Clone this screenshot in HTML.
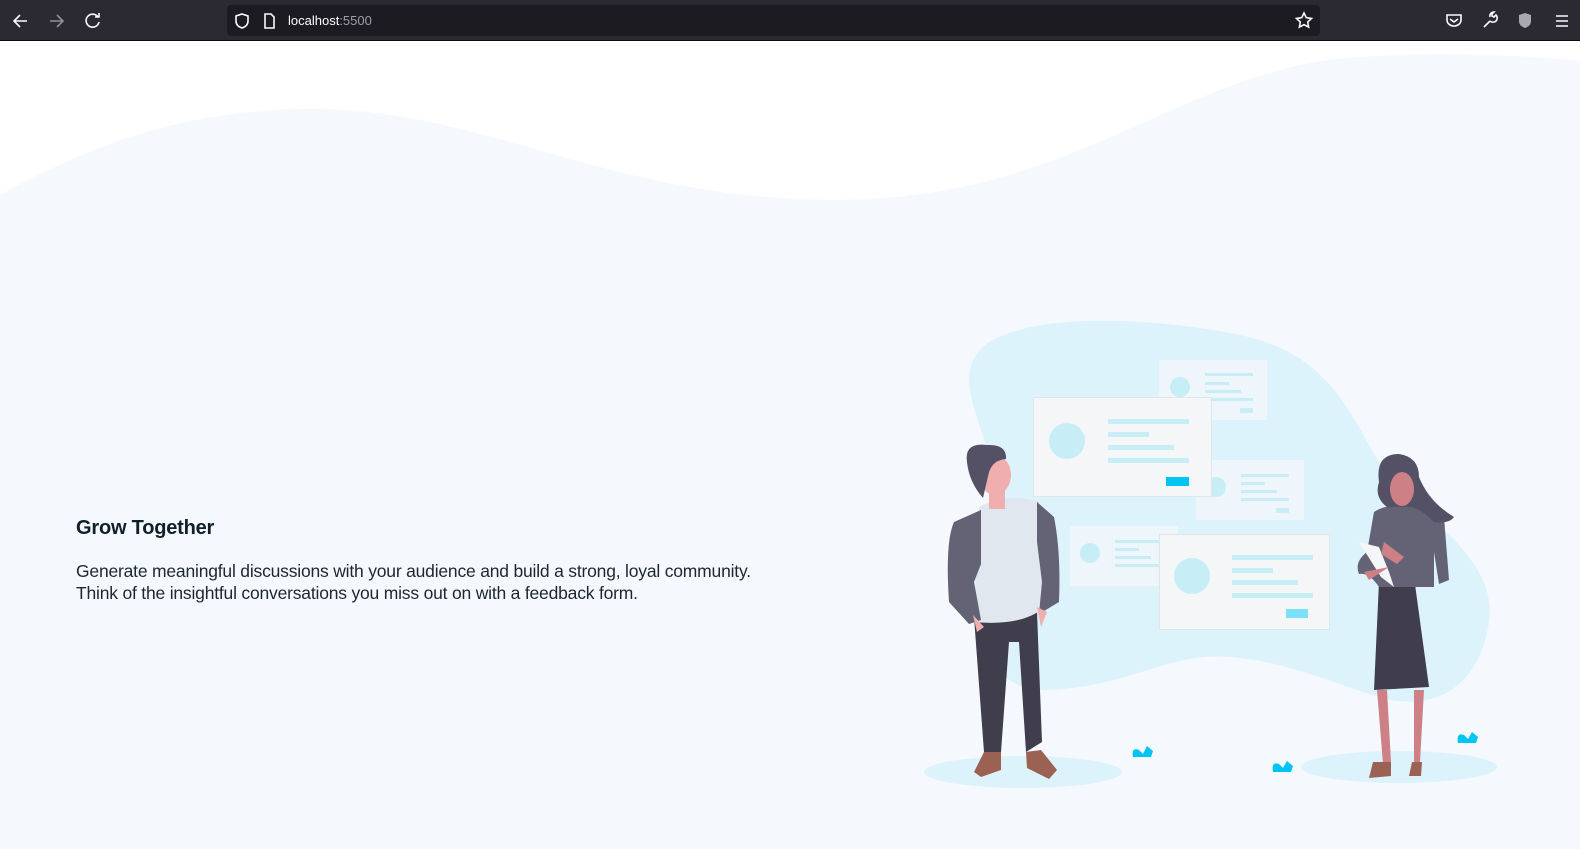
<!DOCTYPE html>
<html><head><meta charset="utf-8"><style>
*{margin:0;padding:0;box-sizing:border-box}
body{width:1580px;height:849px;overflow:hidden;background:#f5f9fd;font-family:"Liberation Sans",sans-serif;position:relative}
.bar{position:absolute;left:0;top:0;width:1580px;height:41px;background:#2b2a33;border-bottom:1px solid #0c0c0d}
.url{position:absolute;left:227px;top:5px;width:1093px;height:31px;background:#1c1b22;border-radius:4px}
.url span{position:absolute;left:61px;top:8px;font-size:13px;color:#fbfbfe}
.url span i{font-style:normal;color:#9e9ea6}
h2{position:absolute;left:76px;top:517px;font-size:20px;font-weight:bold;color:#10202a;letter-spacing:-0.2px}
p{position:absolute;left:76px;top:560px;font-size:17.5px;line-height:22px;color:#1c2730;letter-spacing:-0.2px}
</style></head><body>
<svg style="position:absolute;left:0;top:41px" width="1580" height="808">
<rect width="1580" height="808" fill="#f5f9fd"/>
<path d="M0 0 H1580 V20 C1500 12 1400 10 1320 20 C1150 50 1050 170 800 158 C600 150 480 70 320 68 C180 66 80 110 0 154 Z" fill="#ffffff"/>
</svg>
<div class="bar">
<div class="url"><span>localhost<i>:5500</i></span></div>
<svg width="1580" height="41" style="position:absolute;left:0;top:0" fill="none" stroke="#fbfbfe" stroke-width="1.6">
<path d="M27 21H14M20 15l-6 6 6 6"/>
<path d="M50 21h13M57 15l6 6-6 6" stroke="#8f8f9d"/>
<path d="M98 17a6.5 6.5 0 1 0 1 5M99 13v4h-4"/>
<path d="M242 14l6 2v5c0 4-3 6-6 7-3-1-6-3-6-7v-5z"/>
<path d="M265 14h6l3 3v11h-9z"/>
<path d="M1304 13l2.3 4.7 5.2.7-3.8 3.6.9 5.1-4.6-2.4-4.6 2.4.9-5.1-3.8-3.6 5.2-.7z"/>
<path d="M1447 15h14v5a7 6 0 0 1-14 0z M1450 19l4 3 4-3"/>
<path d="M1484 27l6-6M1490 21a4 4 0 0 0 6-6l-2 2-2-1 0-2 2-2a4 4 0 0 0-4 5"/>
<path d="M1556 16h12M1556 21h12M1556 26h12"/>
</svg>
<svg style="position:absolute;left:1518px;top:12px" width="14" height="17"><path d="M7 1l6 2v6c0 4-3 6-6 7-3-1-6-3-6-7V3z" fill="#a8a8b0"/></svg>
</div>
<h2>Grow Together</h2>
<p>Generate meaningful discussions with your audience and build a strong, loyal community.<br>Think of the insightful conversations you miss out on with a feedback form.</p>
<svg style="position:absolute;left:909px;top:302px" width="620" height="500">
<path d="M80 40 C130 10 250 15 340 35 C420 55 440 110 470 160 C500 210 590 250 580 320 C570 390 520 410 470 395 C420 380 380 360 320 355 C260 350 220 385 140 388 C90 390 70 350 60 300 C50 240 100 220 85 170 C70 110 40 70 80 40Z" fill="#dcf3fc"/>
<ellipse cx="114" cy="470" rx="99" ry="16" fill="#dcf3fc"/>
<ellipse cx="490" cy="465" rx="98" ry="16" fill="#dcf3fc"/>
<rect x="250" y="58" width="108" height="60" fill="#eef6fb"/>
<circle cx="271" cy="85" r="10" fill="#c7edf7"/>
<rect x="296" y="71" width="48" height="3" fill="#c7edf7"/><rect x="296" y="80" width="24" height="3" fill="#c7edf7"/><rect x="296" y="88" width="36" height="3" fill="#c7edf7"/><rect x="296" y="96" width="48" height="3" fill="#c7edf7"/><rect x="331" y="106" width="13" height="5" fill="#c7edf7"/>
<rect x="287" y="158" width="108" height="60" fill="#eef6fb"/>
<circle cx="307" cy="185" r="10" fill="#c7edf7"/>
<rect x="332" y="172" width="48" height="3" fill="#c7edf7"/><rect x="332" y="180" width="24" height="3" fill="#c7edf7"/><rect x="332" y="188" width="36" height="3" fill="#c7edf7"/><rect x="332" y="196" width="48" height="3" fill="#c7edf7"/><rect x="367" y="206" width="13" height="5" fill="#c7edf7"/>
<rect x="161" y="224" width="108" height="60" fill="#eef6fb"/>
<circle cx="181" cy="251" r="10" fill="#c7edf7"/>
<rect x="206" y="238" width="48" height="3" fill="#c7edf7"/><rect x="206" y="246" width="24" height="3" fill="#c7edf7"/><rect x="206" y="254" width="36" height="3" fill="#c7edf7"/><rect x="206" y="262" width="48" height="3" fill="#c7edf7"/>
<rect x="124.5" y="95.5" width="178" height="99" fill="#f5f6f8" stroke="#dfe6ea"/>
<circle cx="158" cy="139" r="18" fill="#c7edf7"/>
<rect x="199" y="117" width="81" height="5" fill="#c7edf7"/><rect x="199" y="130" width="41" height="5" fill="#c7edf7"/><rect x="199" y="143" width="66" height="5" fill="#c7edf7"/><rect x="199" y="156" width="81" height="5" fill="#c7edf7"/>
<rect x="257" y="175" width="23" height="9" fill="#00c4f4"/>
<rect x="250.5" y="232.5" width="170" height="95" fill="#f5f6f8" stroke="#dfe6ea"/>
<circle cx="283" cy="274" r="18" fill="#c7edf7"/>
<rect x="323" y="253" width="81" height="5" fill="#c7edf7"/><rect x="323" y="266" width="41" height="5" fill="#c7edf7"/><rect x="323" y="278" width="66" height="5" fill="#c7edf7"/><rect x="323" y="291" width="81" height="5" fill="#c7edf7"/>
<rect x="377" y="307" width="22" height="9" fill="#7ae1f8"/>
<!-- man -->
<path d="M65 315 L128 310 L133 440 L117 450 L110 340 L100 340 L92 450 L75 450Z" fill="#403d4d"/>
<path d="M70 205 Q100 190 130 200 L140 300 Q120 325 65 320 Z" fill="#e1e7ef"/>
<path d="M72 208 L45 220 Q36 240 40 300 L60 322 L72 318 L65 280 L72 262 Z" fill="#646376"/>
<path d="M128 200 L145 215 Q152 250 150 300 L130 312 L133 280 L128 240Z" fill="#646376"/>
<path d="M75 450 L92 450 L92 468 L72 475 L65 470Z" fill="#9b6153"/><path d="M117 450 L132 448 L148 468 L140 477 L118 466Z" fill="#9b6153"/>
<rect x="80" y="185" width="16" height="22" fill="#f1aeae"/>
<ellipse cx="86" cy="173" rx="16" ry="20" fill="#f1aeae"/>
<path d="M58 160 Q55 140 78 143 Q98 142 97 157 Q84 158 80 170 L74 196 Q60 180 58 160Z" fill="#545065"/>
<path d="M64 313 L68 330 L75 325Z M128 305 L132 325 L138 310Z" fill="#f1aeae"/>
<!-- woman -->
<path d="M470 280 L505 275 L520 385 L465 388Z" fill="#403d4d"/>
<path d="M468 388 L478 388 L482 460 L474 462Z M505 388 L515 388 L511 460 L505 462Z" fill="#cd8085"/>
<path d="M464 460 L482 460 L482 474 L460 476Z M503 460 L513 460 L512 474 L500 474Z" fill="#9b6153"/>
<path d="M465 210 Q480 200 505 205 Q530 205 535 215 L540 278 L530 282 L525 250 L525 285 L470 285 Q460 270 450 272 Q445 260 458 250Z" fill="#646376"/>
<path d="M450 240 L470 245 L480 270 L485 285 L472 275 Z" fill="#f5f6f8"/>
<path d="M475 240 L495 255 L488 262 L472 252Z M480 265 L455 270 L460 278 Z" fill="#cd8085"/>
<path d="M470 180 Q466 152 490 152 Q510 155 510 175 Q520 200 545 215 Q540 222 525 220 Q510 205 500 205 L478 205 Q465 195 470 180Z" fill="#545065"/>
<ellipse cx="493" cy="187" rx="12" ry="17" fill="#cd8085"/>
<!-- plants -->
<path d="M224 455 Q222 445 230 448 L234 452 L238 444 L244 449 L242 455Z" fill="#00c4f4"/>
<path d="M364 470 Q362 459 370 462 L374 466 L378 459 L384 464 L382 470Z" fill="#00c4f4"/>
<path d="M549 441 Q547 430 555 433 L559 437 L563 430 L569 435 L567 441Z" fill="#00c4f4"/>
</svg>
</body></html>
